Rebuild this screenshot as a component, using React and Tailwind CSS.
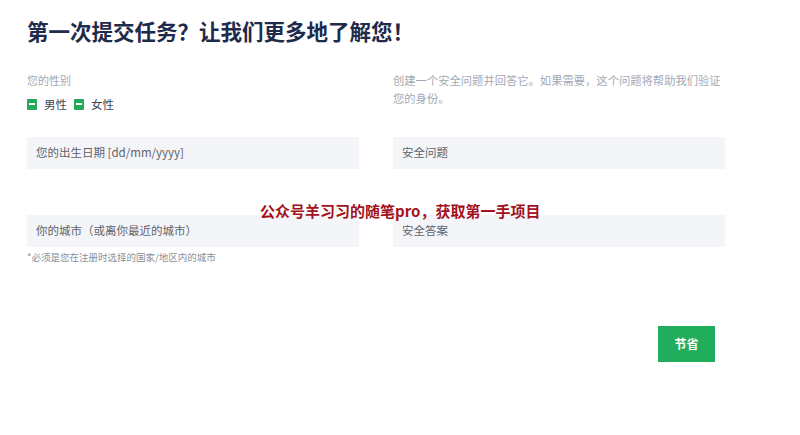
import React from "react";

function Check({ label }) {
  return (
    <div className="flex items-center gap-[7px]">
      <span className="flex h-[11px] w-[10px] items-center justify-center rounded-[1px] bg-[#22a95a]">
        <span className="h-[2px] w-[6px] bg-white" />
      </span>
      <span className="text-[11.5px] leading-[18px] text-[#3f4450]">{label}</span>
    </div>
  );
}

function Field({ text }) {
  return (
    <div className="flex h-[32px] items-center bg-[#f4f5f9] pl-[9px] text-[11.5px] text-[#5f636b]">
      {text}
    </div>
  );
}

export default function App() {
  return (
    <div
      className="relative h-[435px] w-[800px] bg-white"
      style={{ fontFamily: '"Noto Sans CJK SC", "Noto Sans", sans-serif' }}
    >
      <div className="pl-[27px] pt-[16px]">
        <h1 className="text-[21.5px] font-bold leading-[30px] text-[#1f2b4b]">
          第一次提交任务？让我们更多地了解您！
        </h1>
        <div className="mt-[25px] grid w-[698px] grid-cols-2 gap-x-[34px]">
          <div className="h-[66px]">
            <div className="text-[11px] leading-[18px] text-[#a3a9b5]">您的性别</div>
            <div className="mt-[6px] flex items-center gap-[7px]">
              <Check label="男性" />
              <Check label="女性" />
            </div>
          </div>
          <div className="h-[66px] text-[11.3px] leading-[18px] text-[#a3a9b5]">
            创建一个安全问题并回答它。如果需要，这个问题将帮助我们验证您的身份。
          </div>
          <Field text="您的出生日期 [dd/mm/yyyy]" />
          <Field text="安全问题" />
          <div className="mt-[46px]">
            <Field text="你的城市（或离你最近的城市）" />
          </div>
          <div className="mt-[46px]">
            <Field text="安全答案" />
          </div>
          <div className="mt-[3px] text-[9.5px] leading-[14px] text-[#8a8f99]">
            *必须是您在注册时选择的国家/地区内的城市
          </div>
          <div />
        </div>
        <div className="mt-[62px] flex w-[688px] justify-end">
          <button className="flex h-[36px] w-[57px] items-center justify-center bg-[#22ad5c] text-[12px] font-bold text-white">
            节省
          </button>
        </div>
      </div>
      <div className="absolute left-[260px] top-[201px] text-[15px] font-bold leading-[20px] text-[#a3111c]">
        公众号羊习习的随笔pro，获取第一手项目
      </div>
    </div>
  );
}
